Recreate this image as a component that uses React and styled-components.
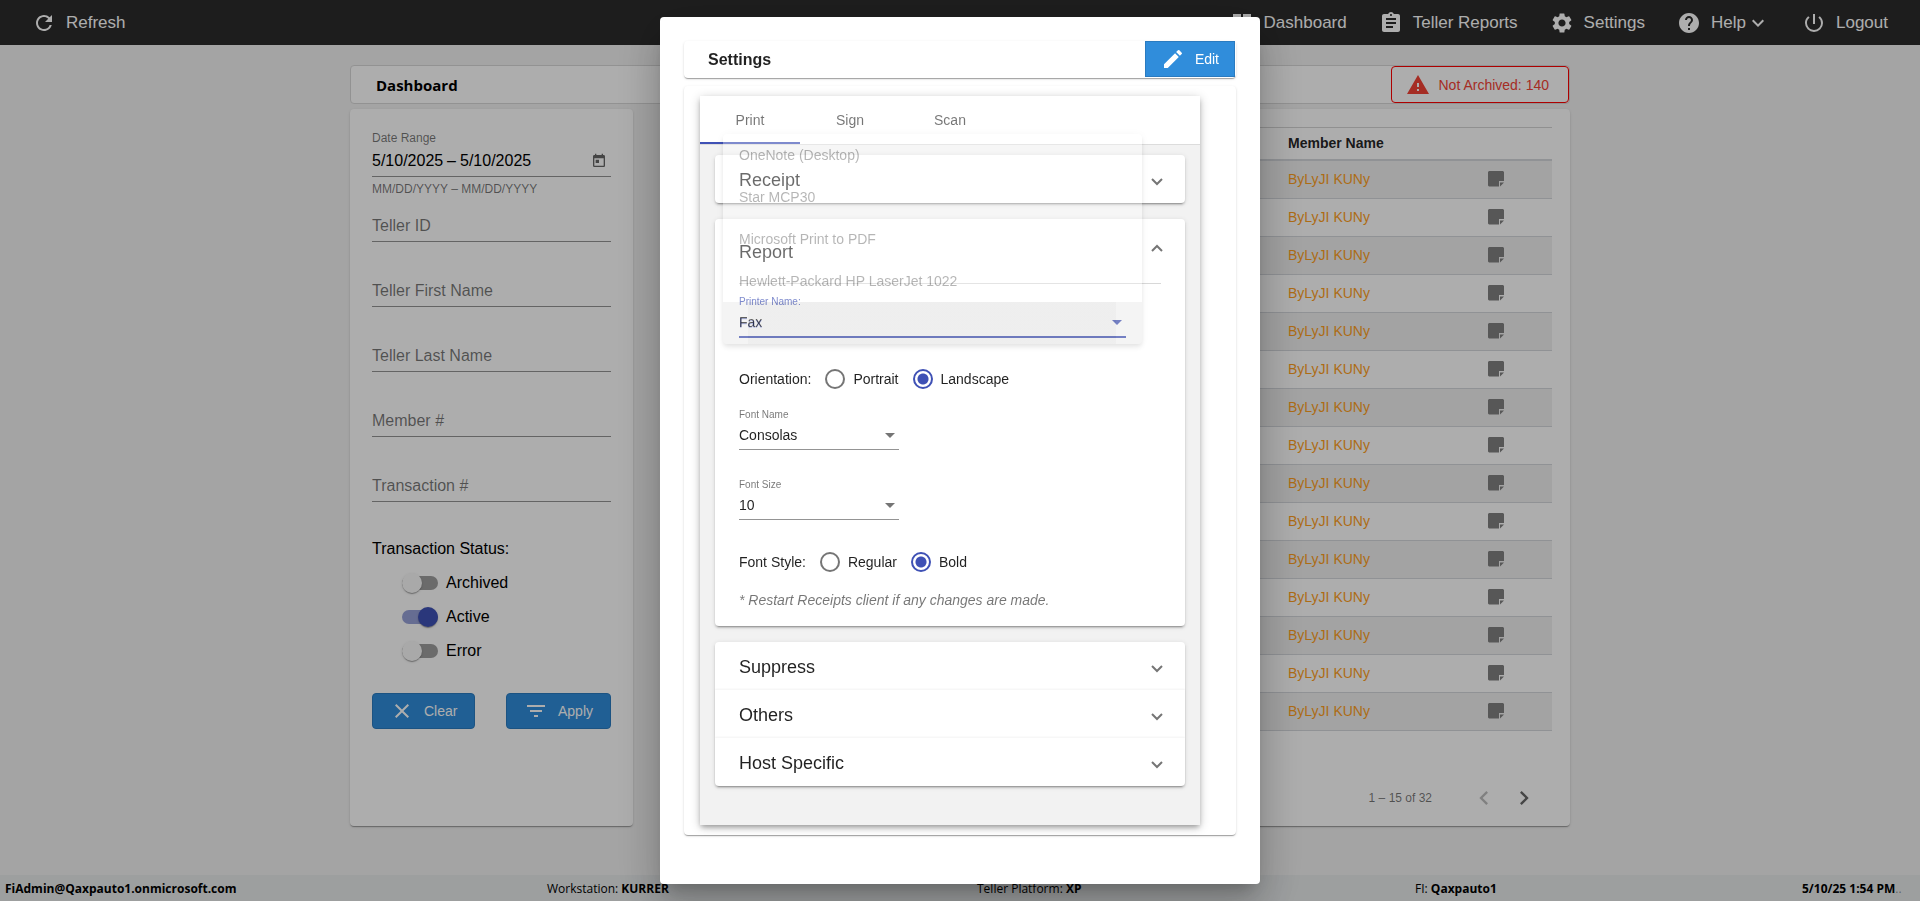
import React from 'react';
import styled, { createGlobalStyle, css } from 'styled-components';
import {
  MdRefresh, MdDashboard, MdAssignment, MdSettings, MdHelp, MdKeyboardArrowDown,
  MdPowerSettingsNew, MdWarning, MdToday, MdClose, MdFilterList, MdEdit,
  MdChevronLeft, MdChevronRight,
} from 'react-icons/md';

const SANS = '"Liberation Sans", Arial, sans-serif';
const HUMANIST = '"Open Sans", "Noto Sans", sans-serif';
const PRIMARY = '#3f51b5';
const cardShadow = css`
  box-shadow: 0 2px 1px -1px rgba(0, 0, 0, 0.2), 0 1px 1px 0 rgba(0, 0, 0, 0.14),
    0 1px 3px 0 rgba(0, 0, 0, 0.12);
`;

const GlobalStyle = createGlobalStyle`
  *, *::before, *::after { box-sizing: border-box; }
  body { margin: 0; background: #f2f2f2; font-family: ${SANS}; font-size: 16px; color: #000; }
  button, input, select { font-family: inherit; margin: 0; }
  svg { display: block; flex: none; }
`;

const Page = styled.div`
  display: flex;
  flex-direction: column;
  min-height: 100vh;
`;

/* ---------- top bar ---------- */
const TopBar = styled.header`
  display: flex;
  justify-content: space-between;
  align-items: center;
  height: 45px;
  padding: 0 32px;
  background: #2c2c2c;
`;
const TopNav = styled.nav`
  display: flex;
  gap: 32px;
`;
const NavButton = styled.button`
  display: flex;
  align-items: center;
  padding: 0;
  border: 0;
  background: none;
  color: #fff;
  font-size: 17px;
  line-height: 24px;
  cursor: pointer;
`;
const NavText = styled.span`
  margin-left: 10px;
`;

/* ---------- dashboard ---------- */
const Main = styled.main`
  flex: 1;
  display: flex;
  flex-direction: column;
  width: 100%;
  max-width: 1220px;
  margin: 0 auto;
  padding: 20px 0 49px;
`;
const TitleBar = styled.div`
  display: flex;
  align-items: center;
  justify-content: space-between;
  height: 39px;
  padding-left: 25px;
  border: 1px solid #d8d8d8;
  border-radius: 4px;
  background: #fff;
`;
const PageTitle = styled.h1`
  margin: 0;
  font: 700 15px/24px ${HUMANIST};
`;
const AlertButton = styled.button`
  display: flex;
  align-items: center;
  gap: 8px;
  height: 37px;
  padding: 0 19px 0 14px;
  border: 1px solid #ff0000;
  border-radius: 4px;
  background: #fff;
  color: #f44336;
  font-size: 14px;
`;
const Columns = styled.div`
  flex: 1;
  display: flex;
  gap: 32px;
  margin-top: 5px;
`;
const Card = styled.section`
  border-radius: 4px;
  background: #fff;
  ${cardShadow}
`;
const FilterCard = styled(Card)`
  flex: none;
  width: 283px;
  padding: 22px;
`;
const DateLabel = styled.label`
  display: block;
  color: rgba(0, 0, 0, 0.54);
  font-size: 12px;
  line-height: 14px;
`;
const DateRow = styled.div`
  display: flex;
  align-items: center;
  height: 32px;
  border-bottom: 1px solid rgba(0, 0, 0, 0.42);
`;
const DateInput = styled.input`
  width: 75px;
  padding: 0;
  border: 0;
  background: none;
  color: #000;
  font-size: 16px;
`;
const Dash = styled.span`
  width: 13px;
`;
const IconButton = styled.button`
  display: flex;
  align-items: center;
  justify-content: center;
  width: ${(p) => p.$size}px;
  height: ${(p) => p.$size}px;
  padding: 0;
  border: 0;
  background: none;
  color: rgba(0, 0, 0, ${(p) => (p.disabled ? 0.26 : 0.6)});
`;
const CalendarButton = styled(IconButton)`
  margin: 0 0 0 auto;
`;
const Hint = styled.div`
  margin: 5px 0 13px;
  color: rgba(0, 0, 0, 0.54);
  font-size: 12px;
  line-height: 14px;
`;
const TextField = styled.input`
  display: block;
  width: 100%;
  height: 33px;
  padding: 2px 0 0;
  border: 0;
  border-bottom: 1px solid rgba(0, 0, 0, 0.42);
  background: none;
  font-size: 16px;
  &::placeholder { color: rgba(0, 0, 0, 0.54); opacity: 1; }
  & + & { margin-top: 32px; }
`;
const StatusGroup = styled.fieldset`
  margin: 37px 0 25px;
  padding: 0;
  border: 0;
`;
const StatusLegend = styled.legend`
  margin-bottom: 7px;
  padding: 0;
  line-height: 20px;
`;
const ToggleRow = styled.label`
  display: flex;
  align-items: center;
  gap: 8px;
  height: 34px;
  padding-left: 30px;
`;
const Toggle = styled.input`
  appearance: none;
  display: flex;
  align-items: center;
  width: 36px;
  height: 14px;
  border-radius: 7px;
  background: rgba(0, 0, 0, 0.38);
  &::before {
    content: '';
    width: 20px;
    height: 20px;
    border-radius: 50%;
    background: #fafafa;
    ${cardShadow}
  }
  &:checked { background: rgba(63, 81, 181, 0.54); }
  &:checked::before { margin-left: 16px; background: ${PRIMARY}; }
`;
const ButtonRow = styled.div`
  display: flex;
  justify-content: space-between;
`;
const ActionButton = styled.button`
  display: flex;
  align-items: center;
  gap: 10px;
  height: 36px;
  padding: 0 ${(p) => (p.$square ? 15 : 17)}px;
  border: 1px solid #2a7bc0;
  border-radius: ${(p) => (p.$square ? 0 : 4)}px;
  background: #308ddb;
  color: #fff;
  font-size: 14px;
`;

const TableCard = styled(Card)`
  flex: 1;
  display: flex;
  flex-direction: column;
  padding: 18px 18px 0;
`;
const Table = styled.table`
  width: 100%;
  border-spacing: 0;
  table-layout: fixed;
  font-size: 14px;
`;
const HeadCell = styled.th`
  width: ${(p) => p.$width};
  height: 34px;
  padding: 0 0 2px;
  border-top: 1px solid #d4d4d4;
  border-bottom: 2px solid #d4d7dc;
  text-align: left;
  font-weight: 700;
  color: rgba(0, 0, 0, 0.87);
`;
const Row = styled.tr`
  &:nth-child(odd) { background: #f0f0f0; }
`;
const Cell = styled.td`
  height: 38px;
  padding: 0 0 2px;
  border-bottom: 1px solid #d4d7dc;
  color: #ffa01e;
`;
const Pager = styled.div`
  display: flex;
  align-items: center;
  justify-content: flex-end;
  height: 56px;
  margin-top: auto;
  padding-right: 8px;
  color: rgba(0, 0, 0, 0.54);
  font-size: 12px;
`;
const PagerRange = styled.span`
  margin-right: 32px;
`;

/* ---------- status bar ---------- */
const StatusBar = styled.footer`
  display: grid;
  grid-template-columns: 542fr 430fr 438fr 387fr 110fr;
  height: 26px;
  padding: 0 8px 0 5px;
  background: #e7eaeb;
  font: 400 12px/28px ${HUMANIST};
  white-space: nowrap;
`;
const Faint = styled.span`
  color: rgba(0, 0, 0, 0.4);
`;

/* ---------- dialog ---------- */
const Backdrop = styled.div`
  position: fixed;
  inset: 0;
  display: flex;
  align-items: center;
  justify-content: center;
  background: rgba(0, 0, 0, 0.32);
`;
const Dialog = styled.div`
  width: 600px;
  padding: 24px 24px 49px;
  border-radius: 4px;
  background: #fff;
  color: rgba(0, 0, 0, 0.87);
  font-size: 14px;
  box-shadow: 0 11px 15px -7px rgba(0, 0, 0, 0.2), 0 24px 38px 3px rgba(0, 0, 0, 0.14),
    0 9px 46px 8px rgba(0, 0, 0, 0.12);
`;
const DialogHead = styled.div`
  display: flex;
  align-items: flex-start;
  justify-content: space-between;
  height: 37px;
  padding: 0 1px 0 24px;
  border-radius: 4px;
  ${cardShadow}
`;
const DialogTitle = styled.h2`
  margin: 0;
  font-size: 16px;
  line-height: 37px;
`;
const DialogCard = styled(Card)`
  margin-top: 8px;
  padding: 10px 36px 10px 16px;
`;
const TabPanel = styled.div`
  padding-bottom: 39px;
  background: #f2f2f2;
  box-shadow: 0 3px 5px -1px rgba(0, 0, 0, 0.3), 0 2px 10px 0 rgba(0, 0, 0, 0.2);
`;
const Tabs = styled.div`
  display: flex;
  border-bottom: 1px solid #dcdcdc;
  background: #fff;
`;
const Tab = styled.button`
  width: 100px;
  height: 48px;
  padding: 2px 0 0;
  border: 0;
  border-bottom: 2px solid ${(p) => (p.$active ? PRIMARY : 'transparent')};
  background: none;
  color: rgba(0, 0, 0, 0.54);
  font-size: 14px;
`;
const Accordion = styled.div`
  position: relative;
  display: flex;
  flex-direction: column;
  gap: 16px;
  padding: 10px 15px 0;
`;
const PanelGroup = styled.div`
  border-radius: 4px;
  background: #fff;
  box-shadow: 0 3px 1px -2px rgba(0, 0, 0, 0.2), 0 2px 2px 0 rgba(0, 0, 0, 0.14),
    0 1px 5px 0 rgba(0, 0, 0, 0.12);
`;
const PanelHeader = styled.button`
  display: flex;
  align-items: center;
  justify-content: space-between;
  width: 100%;
  height: ${(p) => (p['aria-expanded'] ? 64 : 48)}px;
  padding: 2px 22px 0 24px;
  border: 0;
  background: none;
  color: rgba(0, 0, 0, 0.87);
  font-size: 18px;
  & + & { box-shadow: 0 -1px 2px rgba(0, 0, 0, 0.05); }
`;
const Chevron = styled.svg`
  width: 12px;
  height: 8px;
  margin: ${(p) => (p.$up ? '0 0 8px' : '4px 0 0')};
  fill: none;
  stroke: rgba(0, 0, 0, 0.54);
  stroke-width: 2;
`;
const PanelBody = styled.div`
  margin: 0 24px;
  padding: 12px 0 18px;
  border-top: 1px solid #d8d8d8;
`;
const SelectField = styled.div`
  width: ${(p) => p.$width};
  margin-bottom: ${(p) => p.$after}px;
`;
const SelectLabel = styled.label`
  display: block;
  color: ${(p) => (p.$active ? PRIMARY : 'rgba(0, 0, 0, 0.54)')};
  font-size: 10px;
  line-height: 12px;
`;
const SelectWrap = styled.div`
  display: flex;
  align-items: center;
  height: ${(p) => (p.$active ? 30 : 29)}px;
  border-bottom: ${(p) => (p.$active ? `2px solid ${PRIMARY}` : '1px solid rgba(0, 0, 0, 0.42)')};
  color: ${(p) => (p.$active ? PRIMARY : 'rgba(0, 0, 0, 0.54)')};
`;
const Select = styled.select`
  flex: 1;
  min-width: 0;
  appearance: none;
  padding: 0;
  border: 0;
  background: none;
  color: rgba(0, 0, 0, 0.87);
  font-size: 14px;
  line-height: 16px;
`;
const Caret = styled.svg`
  width: 10px;
  height: 5px;
  margin-right: 4px;
  fill: currentColor;
`;
const RadioGroup = styled.fieldset`
  display: flex;
  align-items: center;
  gap: 14px;
  height: 20px;
  margin: 0;
  padding: 0;
  border: 0;
`;
const RadioLabel = styled.label`
  display: flex;
  align-items: center;
  gap: 8px;
`;
const Radio = styled.input`
  appearance: none;
  width: 20px;
  height: 20px;
  border: 2px solid rgba(0, 0, 0, 0.54);
  border-radius: 50%;
  background: #fff;
  &:checked { border-color: ${PRIMARY}; background: radial-gradient(${PRIMARY} 5px, #fff 6px); }
`;
const Note = styled.p`
  margin: 20px 0 0;
  color: rgba(0, 0, 0, 0.54);
  font-style: italic;
  line-height: 16px;
`;
/* The list of printers lies half transparent over the panels while it opens. */
const PrinterMenu = styled.ul`
  position: absolute;
  top: -11px;
  left: 23px;
  width: 419px;
  margin: 0;
  padding: 0;
  border-radius: 4px;
  background: #fff;
  list-style: none;
  opacity: 0.33;
  overflow: hidden;
  box-shadow: 0 2px 4px -1px rgba(0, 0, 0, 0.2), 0 4px 5px 0 rgba(0, 0, 0, 0.14),
    0 1px 10px 0 rgba(0, 0, 0, 0.12);
`;
const PrinterOption = styled.li`
  height: 42px;
  padding: 0 16px;
  line-height: 42px;
  ${(p) => p['aria-selected'] && css`
    background: linear-gradient(rgba(0, 0, 0, 0.08), rgba(0, 0, 0, 0.08)) 25px 0 / 368px 100% no-repeat rgba(0, 0, 0, 0.12);
    color: ${PRIMARY};
  `}
`;

const PRINTERS = ['OneNote (Desktop)', 'Star MCP30', 'Microsoft Print to PDF', 'Hewlett-Packard HP LaserJet 1022', 'Fax'];
const FIELDS = ['Teller ID', 'Teller First Name', 'Teller Last Name', 'Member #', 'Transaction #'];
const MEMBERS = Array.from({ length: 15 }, () => 'ByLyJI KUNy');

function NavItem({ icon: Icon, children, menu }) {
  return (
    <NavButton type="button">
      <Icon size={24} />
      <NavText>{children}</NavText>
      {menu && <MdKeyboardArrowDown size={24} />}
    </NavButton>
  );
}

function NoteIcon() {
  return (
    <svg width="16" height="16" viewBox="0 0 16 16" fill="#808080" role="img" aria-label="Note">
      <path d="M1 0H15L16 1V10H11V15.500H1L0 14.500V1Z" />
      <path d="M12 11.500H16L12 15.500Z" />
    </svg>
  );
}

function Arrow({ up }) {
  return (
    <Chevron viewBox="0 0 12 8" $up={up}>
      <path d={up ? 'M1 7 6 2 11 7' : 'M1 1 6 6 11 1'} />
    </Chevron>
  );
}

function Panel({ open, children }) {
  return (
    <PanelHeader type="button" aria-expanded={!!open}>
      <span>{children}</span>
      <Arrow up={open} />
    </PanelHeader>
  );
}

function SelectBox({ id, label, options, value, active, width, after }) {
  return (
    <SelectField $width={width} $after={after}>
      <SelectLabel htmlFor={id} $active={active}>{label}</SelectLabel>
      <SelectWrap $active={active}>
        <Select id={id} defaultValue={value}>
          {options.map((o) => <option key={o}>{o}</option>)}
        </Select>
        <Caret viewBox="0 0 10 5"><path d="M0 0H10L5 5Z" /></Caret>
      </SelectWrap>
    </SelectField>
  );
}

function Radios({ name, label, options, value }) {
  return (
    <RadioGroup aria-label={label}>
      <span>{label}</span>
      {options.map((o) => (
        <RadioLabel key={o}>
          <Radio type="radio" name={name} defaultChecked={o === value} />
          {o}
        </RadioLabel>
      ))}
    </RadioGroup>
  );
}

const FontFields = styled.div`
  margin: 20px 0 32px;
`;

function Filters() {
  return (
    <FilterCard>
      <DateLabel htmlFor="from">Date Range</DateLabel>
      <DateRow>
        <DateInput id="from" defaultValue="5/10/2025" />
        <Dash>–</Dash>
        <DateInput aria-label="End date" defaultValue="5/10/2025" />
        <CalendarButton type="button" aria-label="Open calendar" $size={24}>
          <MdToday size={16} />
        </CalendarButton>
      </DateRow>
      <Hint>MM/DD/YYYY – MM/DD/YYYY</Hint>
      {FIELDS.map((f) => <TextField key={f} aria-label={f} placeholder={f} />)}
      <StatusGroup>
        <StatusLegend>Transaction Status:</StatusLegend>
        {['Archived', 'Active', 'Error'].map((s) => (
          <ToggleRow key={s}>
            <Toggle type="checkbox" defaultChecked={s === 'Active'} />
            {s}
          </ToggleRow>
        ))}
      </StatusGroup>
      <ButtonRow>
        <ActionButton type="button"><MdClose size={24} />Clear</ActionButton>
        <ActionButton type="button"><MdFilterList size={24} />Apply</ActionButton>
      </ButtonRow>
    </FilterCard>
  );
}

function Members() {
  return (
    <TableCard>
      <Table>
        <thead>
          <tr>
            <HeadCell $width="auto" />
            <HeadCell $width="200px">Member Name</HeadCell>
            <HeadCell $width="64px" />
          </tr>
        </thead>
        <tbody>
          {MEMBERS.map((m, i) => (
            <Row key={i}>
              <Cell />
              <Cell>{m}</Cell>
              <Cell><NoteIcon /></Cell>
            </Row>
          ))}
        </tbody>
      </Table>
      <Pager>
        <PagerRange>1 – 15 of 32</PagerRange>
        <IconButton type="button" aria-label="Previous page" $size={40} disabled><MdChevronLeft size={28} /></IconButton>
        <IconButton type="button" aria-label="Next page" $size={40}><MdChevronRight size={28} /></IconButton>
      </Pager>
    </TableCard>
  );
}

function SettingsDialog() {
  return (
    <Backdrop>
      <Dialog role="dialog" aria-modal="true" aria-labelledby="settings-title">
        <DialogHead>
          <DialogTitle id="settings-title">Settings</DialogTitle>
          <ActionButton type="button" $square><MdEdit size={24} />Edit</ActionButton>
        </DialogHead>
        <DialogCard>
          <TabPanel>
            <Tabs role="tablist">
              {['Print', 'Sign', 'Scan'].map((t) => (
                <Tab key={t} type="button" role="tab" $active={t === 'Print'}>{t}</Tab>
              ))}
            </Tabs>
            <Accordion>
              <PanelGroup><Panel>Receipt</Panel></PanelGroup>
              <PanelGroup>
                <Panel open>Report</Panel>
                <PanelBody>
                  <SelectBox id="printer" label="Printer Name:" options={PRINTERS} value="Fax" active width="387px" after={31} />
                  <Radios name="orientation" label="Orientation:" options={['Portrait', 'Landscape']} value="Landscape" />
                  <FontFields>
                    <SelectBox id="font" label="Font Name" options={['Consolas']} value="Consolas" width="160px" after={29} />
                    <SelectBox id="size" label="Font Size" options={['10']} value="10" width="160px" after={0} />
                  </FontFields>
                  <Radios name="style" label="Font Style:" options={['Regular', 'Bold']} value="Bold" />
                  <Note>* Restart Receipts client if any changes are made.</Note>
                </PanelBody>
              </PanelGroup>
              <PanelGroup>
                <Panel>Suppress</Panel>
                <Panel>Others</Panel>
                <Panel>Host Specific</Panel>
              </PanelGroup>
              <PrinterMenu role="listbox" aria-label="Printer Name">
                {PRINTERS.map((p) => (
                  <PrinterOption key={p} role="option" aria-selected={p === 'Fax'}>{p}</PrinterOption>
                ))}
              </PrinterMenu>
            </Accordion>
          </TabPanel>
        </DialogCard>
      </Dialog>
    </Backdrop>
  );
}

export default function App() {
  return (
    <>
      <GlobalStyle />
      <Page>
        <TopBar>
          <NavItem icon={MdRefresh}>Refresh</NavItem>
          <TopNav>
            <NavItem icon={MdDashboard}>Dashboard</NavItem>
            <NavItem icon={MdAssignment}>Teller Reports</NavItem>
            <NavItem icon={MdSettings}>Settings</NavItem>
            <NavItem icon={MdHelp} menu>Help</NavItem>
            <NavItem icon={MdPowerSettingsNew}>Logout</NavItem>
          </TopNav>
        </TopBar>
        <Main>
          <TitleBar>
            <PageTitle>Dashboard</PageTitle>
            <AlertButton type="button"><MdWarning size={24} />Not Archived: 140</AlertButton>
          </TitleBar>
          <Columns>
            <Filters />
            <Members />
          </Columns>
        </Main>
        <StatusBar>
          <b>FiAdmin@Qaxpauto1.onmicrosoft.com</b>
          <span>Workstation: <b>KURRER</b></span>
          <span>Teller Platform: <b>XP</b></span>
          <span>FI: <b>Qaxpauto1</b></span>
          <span><b>5/10/25 1:54 PM</b><Faint>..</Faint></span>
        </StatusBar>
      </Page>
      <SettingsDialog />
    </>
  );
}
